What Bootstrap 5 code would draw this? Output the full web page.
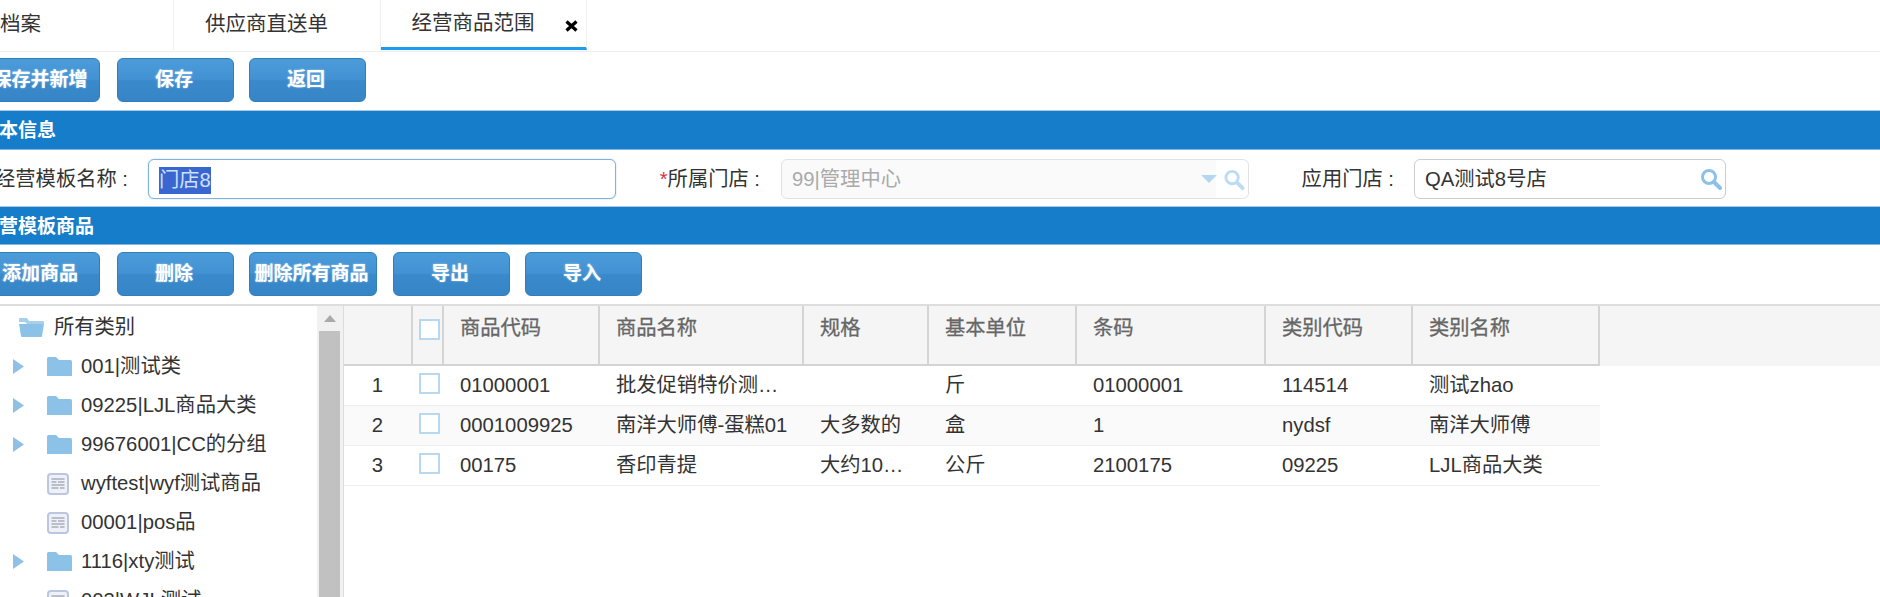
<!DOCTYPE html>
<html lang="zh">
<head>
<meta charset="utf-8">
<title>经营商品范围</title>
<link rel="stylesheet" href="https://cdn.jsdelivr.net/npm/bootstrap@5.3.0/dist/css/bootstrap.min.css">
<style>
html,body{height:597px;overflow:hidden;background:#fff}
body{font-family:"Liberation Sans","Noto Sans CJK SC",sans-serif;font-size:20.3px;color:#333;width:1880px}
.shell{margin-left:-20px;width:1900px}
.tabbar{height:52px;border-bottom:1px solid #eee}
.tabitem{width:206.5px;height:50px;line-height:48px;border-right:1px solid #f0f0f0;padding-left:31px;color:#333;flex:none;font-size:20.5px}
.tabitem.lead-tab{width:194px;padding-left:20px}
.tabitem.on{position:relative;line-height:45px;border-bottom:3px solid #1a9cf0}
.tabclose{position:absolute;left:184px;top:20px;display:block}
.actions{padding-left:3px;gap:15px;height:58px;padding-top:6px}
.actions.second{height:59px;padding-top:7px}
.actions .blue-btn:first-child{margin-right:2px}
.blue-btn{width:117px;height:44px;border:1px solid #2f7fbd;border-radius:6px;background:linear-gradient(#4c9bd9,#4292d4 48%,#3a89cb 52%,#3585c7);color:#fff;font-weight:700;font-size:19px;line-height:40px;padding:0 3px 0 0;text-align:center;text-shadow:0 0 2px rgba(255,255,255,.6);white-space:nowrap}
.blue-btn.wide{width:128px;margin-right:1px}
.sect{background:#167dca;color:#fff;font-weight:700;font-size:19px;height:40px;line-height:39px;border-top:1px solid #a9cbe8;border-bottom:1px solid #7fb7e3;white-space:nowrap}
.sect.low{height:39px}
.formrow{height:56px;align-items:center;padding-top:1px}
.flabel{color:#333;white-space:nowrap;text-align:right;flex:none;padding-top:2px}
.l1{width:148px}.l2{width:144px}.l3{width:145px}
.fbox{height:40px;border-radius:6px;position:relative;flex:none;padding-left:10px;line-height:39px;background:#fff;white-space:nowrap}
.b1{width:468px;margin-left:20px;border:1px solid #7fb2de;box-shadow:0 0 2px #b9d6ee}
.b2{width:468px;margin-left:21px;border:1px solid #e2e2e2;background:linear-gradient(to right,#fafafa 434px,#fff 434px);color:#aaa}
.b3{width:312px;margin-left:20px;border:1px solid #ccc}
.picked{background:#3a66d0;color:#cfe0ff;display:inline-block;height:27px;line-height:27px;vertical-align:middle}
.svgmark{position:absolute;display:block}
.split{border-top:2px solid #ddd;height:294px;margin-left:20px}
.treebox{width:317px;overflow:hidden;padding-top:2px;flex:none}
.treerow{height:39px;display:flex;align-items:center;white-space:nowrap;color:#333}
.slot-a{width:47px;flex:none;padding-left:13px;display:flex}
.slot-b{width:34px;flex:none;display:flex}
.rootrow{padding-left:19px}
.rootrow .slot-b{width:35px}
.scrolltrack{width:27px;flex:none;background:#f1f1f1;border-right:1px solid #ddd;position:relative;padding:25px 3px 0 2px}
.scrollup{position:absolute;left:7px;top:9px;width:0;height:0;border-left:6px solid transparent;border-right:6px solid transparent;border-bottom:7px solid #aaa}
.thumbbar{background:#c1c1c1;height:100%}
.gridwrap{flex:1;overflow:hidden}
table.goods{table-layout:fixed;width:1536px;margin:0;border-collapse:separate;border-spacing:0;--bs-table-bg:transparent}
table.goods th{background:#f5f5f5;color:#666;font-weight:400;-webkit-text-stroke:.3px #666;height:60px;vertical-align:top;padding:7px 15px 0 16px;border-right:2px solid #d4d4d4;border-bottom:2px solid #d4d4d4;white-space:nowrap}
table.goods th.blank{border:0}
table.goods td{height:40px;padding:0 15px 0 16px;vertical-align:middle;border-bottom:1px solid #eee;white-space:nowrap;color:#333;overflow:hidden;box-shadow:none;line-height:39px}
table.goods tr.alt td{background:#fafafa}
table.goods td.blank{border:0;background:#fff!important}
table.goods .numcol{text-align:center;padding:0 2px 0 0}
table.goods .chkcol{padding:0 0 0 6px}
.tick{display:block;width:21px;height:21px;border:2px solid #b7d8f0;background:#fff}
td .tick{margin-top:-4px}
th .tick{margin-top:13px}
</style>
</head>
<body>
<div class="shell">
  <div class="tabbar d-flex">
    <div class="tabitem lead-tab">档案</div>
    <div class="tabitem">供应商直送单</div>
    <div class="tabitem on">经营商品范围<svg class="tabclose" width="13" height="12" viewBox="0 0 13 12"><path d="M1.5 1.5l10 9M11.5 1.5l-10 9" stroke="#000" stroke-width="3.2" fill="none"/></svg></div>
  </div>
  <div class="actions d-flex">
    <button class="blue-btn" type="button">保存并新增</button>
    <button class="blue-btn" type="button">保存</button>
    <button class="blue-btn" type="button">返回</button>
  </div>
  <div class="sect">基本信息</div>
  <div class="formrow d-flex">
    <div class="flabel l1">经营模板名称 :</div>
    <div class="fbox b1"><span class="picked">门店8</span></div>
    <div class="flabel l2"><span class="text-danger">*</span>所属门店 :</div>
    <div class="fbox b2">99|管理中心
      <svg class="svgmark" style="left:419px;top:15px" width="16" height="8" viewBox="0 0 16 8"><path d="M0 0h16L8 8z" fill="#b5d6ef"/></svg>
      <svg class="svgmark" style="left:441px;top:9px" width="22" height="21" viewBox="0 0 22 22"><circle cx="9" cy="9" r="6.5" fill="none" stroke="#bcdcf3" stroke-width="3"/><path d="M14 14l6 6" stroke="#bcdcf3" stroke-width="4" stroke-linecap="round"/></svg>
    </div>
    <div class="flabel l3">应用门店 :</div>
    <div class="fbox b3">QA测试8号店
      <svg class="svgmark" style="left:285px;top:8px" width="22" height="22" viewBox="0 0 22 22"><circle cx="9" cy="9" r="6.5" fill="none" stroke="#8cc2ea" stroke-width="3"/><path d="M14 14l6 6" stroke="#8cc2ea" stroke-width="4" stroke-linecap="round"/></svg>
    </div>
  </div>
  <div class="sect low">经营模板商品</div>
  <div class="actions second d-flex">
    <button class="blue-btn" type="button">添加商品</button>
    <button class="blue-btn" type="button">删除</button>
    <button class="blue-btn wide" type="button">删除所有商品</button>
    <button class="blue-btn" type="button">导出</button>
    <button class="blue-btn" type="button">导入</button>
  </div>
  <div class="split d-flex">
    <div class="treebox">
      <svg width="0" height="0" class="d-block">
        <defs>
          <symbol id="ico-arrow" viewBox="0 0 11 15"><path d="M0 0l11 7.5L0 15z" fill="#8fc1e6"/></symbol>
          <symbol id="ico-folder" viewBox="0 0 25 19"><path d="M0 1.5Q0 0 1.5 0H9l3 3h11.5Q25 3 25 5v14H0z" fill="#8cc2e8"/></symbol>
          <symbol id="ico-open" viewBox="0 0 25 19"><path d="M0 1Q0 0 1 0h7l2 3h14q1 0 1 1v2H8L6 4H0z" fill="#a8d0ec"/><path d="M0 6h25l-2 12q0 1-1 1H3q-1 0-1-1z" fill="#8cc2e8"/></symbol>
          <symbol id="ico-doc" viewBox="0 0 22 22"><rect x="1" y="1" width="20" height="20" rx="3" fill="#eef1f8" stroke="#bcc6e0" stroke-width="2"/><path d="M4.5 6h13M4.5 9h5M11 9h6.5M4.5 12h13M4.5 15h7M13 15h4.5" stroke="#a9adb8" stroke-width="1.6"/></symbol>
        </defs>
      </svg>
      <div class="treerow rootrow"><span class="slot-b"><svg width="25" height="19"><use href="#ico-open"/></svg></span>所有类别</div>
      <div class="treerow"><span class="slot-a"><svg width="11" height="15"><use href="#ico-arrow"/></svg></span><span class="slot-b"><svg width="25" height="19"><use href="#ico-folder"/></svg></span>001|测试类</div>
      <div class="treerow"><span class="slot-a"><svg width="11" height="15"><use href="#ico-arrow"/></svg></span><span class="slot-b"><svg width="25" height="19"><use href="#ico-folder"/></svg></span>09225|LJL商品大类</div>
      <div class="treerow"><span class="slot-a"><svg width="11" height="15"><use href="#ico-arrow"/></svg></span><span class="slot-b"><svg width="25" height="19"><use href="#ico-folder"/></svg></span>99676001|CC的分组</div>
      <div class="treerow"><span class="slot-a"></span><span class="slot-b"><svg width="22" height="22"><use href="#ico-doc"/></svg></span>wyftest|wyf测试商品</div>
      <div class="treerow"><span class="slot-a"></span><span class="slot-b"><svg width="22" height="22"><use href="#ico-doc"/></svg></span>00001|pos品</div>
      <div class="treerow"><span class="slot-a"><svg width="11" height="15"><use href="#ico-arrow"/></svg></span><span class="slot-b"><svg width="25" height="19"><use href="#ico-folder"/></svg></span>1116|xty测试</div>
      <div class="treerow"><span class="slot-a"></span><span class="slot-b"><svg width="22" height="22"><use href="#ico-doc"/></svg></span>003|WJL测试</div>
    </div>
    <div class="scrolltrack"><span class="scrollup"></span><div class="thumbbar"></div></div>
    <div class="gridwrap">
      <table class="table goods">
        <colgroup><col style="width:69px"><col style="width:31px"><col style="width:156px"><col style="width:204px"><col style="width:125px"><col style="width:148px"><col style="width:189px"><col style="width:147px"><col style="width:187px"><col></colgroup>
        <thead><tr>
          <th></th><th class="chkcol"><span class="tick"></span></th><th>商品代码</th><th>商品名称</th><th>规格</th><th>基本单位</th><th>条码</th><th>类别代码</th><th>类别名称</th><th class="blank"></th>
        </tr></thead>
        <tbody>
          <tr><td class="numcol">1</td><td class="chkcol"><span class="tick"></span></td><td>01000001</td><td>批发促销特价测…</td><td></td><td>斤</td><td>01000001</td><td>114514</td><td>测试zhao</td><td class="blank"></td></tr>
          <tr class="alt"><td class="numcol">2</td><td class="chkcol"><span class="tick"></span></td><td>0001009925</td><td>南洋大师傅-蛋糕01</td><td>大多数的</td><td>盒</td><td>1</td><td>nydsf</td><td>南洋大师傅</td><td class="blank"></td></tr>
          <tr><td class="numcol">3</td><td class="chkcol"><span class="tick"></span></td><td>00175</td><td>香印青提</td><td>大约10…</td><td>公斤</td><td>2100175</td><td>09225</td><td>LJL商品大类</td><td class="blank"></td></tr>
        </tbody>
      </table>
    </div>
  </div>
</div>
<script src="https://cdn.jsdelivr.net/npm/bootstrap@5.3.0/dist/js/bootstrap.bundle.min.js"></script>
</body>
</html>
